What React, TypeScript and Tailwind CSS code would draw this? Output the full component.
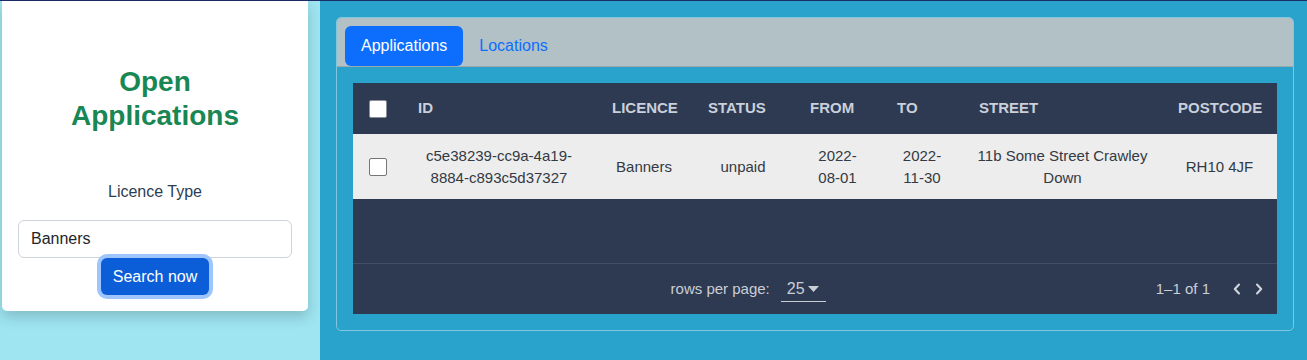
import React from "react";

const cols = "grid grid-cols-[49px_194px_96px_102px_87px_82px_199px_115px]";

function Chevron({ dir }: { dir: "left" | "right" }) {
  return (
    <svg width="10" height="14" viewBox="0 0 10 14" fill="none">
      <path
        d={dir === "left" ? "M7 2.5L2.8 7L7 11.5" : "M3 2.5L7.2 7L3 11.5"}
        stroke="#d3d7de"
        strokeWidth="2"
        strokeLinecap="round"
        strokeLinejoin="round"
      />
    </svg>
  );
}

export default function App() {
  const headers = ["ID", "LICENCE", "STATUS", "FROM", "TO", "STREET", "POSTCODE"];
  const row: [string, string][] = [
    ["c5e38239-cc9a-4a19-8884-c893c5d37327", "px-[16px]"],
    ["Banners", "px-[16px]"],
    ["unpaid", "px-[16px]"],
    ["2022-08-01", "px-[16px]"],
    ["2022-11-30", "px-[16px]"],
    ["11b Some Street Crawley Down", "px-[12px]"],
    ["RH10 4JF", "px-[16px]"],
  ];
  return (
    <div
      className="w-[1307px] h-[360px] flex flex-col overflow-hidden"
      style={{ fontFamily: '"Liberation Sans", Arial, sans-serif' }}
    >
      <div className="h-px bg-[#1c2c68] shrink-0" />
      <div className="flex flex-1 min-w-0">
        {/* Left panel */}
        <aside className="w-[320px] shrink-0 bg-[#9ee5f1] pl-[2px]">
          <div className="w-[306px] bg-white rounded-b-[5px] shadow-[0_6px_14px_rgba(0,0,0,0.18)] flex flex-col items-center pt-[64px] pb-[16px] px-[16px]">
            <h1 className="w-[240px] text-center text-[28px] leading-[34px] font-bold text-[#198754]">
              Open Applications
            </h1>
            <div className="mt-[47px] text-[16px] leading-[24px] text-[#2c3e50]">Licence Type</div>
            <input
              readOnly
              value="Banners"
              className="mt-[16px] w-full h-[38px] border border-[#ced4da] rounded-[6px] px-[12px] text-[16px] text-[#212529] bg-white outline-none"
            />
            <button className="h-[37px] px-[12px] rounded-[6px] bg-[#0b5ed7] text-white text-[16px] shadow-[0_0_0_4px_#9ec5fe]">
              Search now
            </button>
          </div>
        </aside>

        {/* Right area */}
        <main className="flex-1 min-w-0 bg-[#29a3cc] pt-[16px] pl-[16px] pr-[13px]">
          <div className="h-[314px] border border-[#7fc6df] rounded-[5px] flex flex-col">
            <div className="h-[49px] bg-[#b2c1c6] border-b border-[#9aa9ae] rounded-t-[4px] flex items-end pl-[8px] shrink-0">
              <div className="h-[40px] px-[16px] bg-[#0d6efd] text-white rounded-[6px] text-[16px] flex items-center">
                Applications
              </div>
              <div className="h-[40px] px-[16px] text-[#0d6efd] text-[16px] flex items-center">Locations</div>
            </div>
            <div className="p-[16px] flex-1">
              <div className="h-full bg-[#2e3a52] flex flex-col">
                {/* header */}
                <div className={`${cols} h-[51px] items-center text-[15px] font-bold text-[#c9d0db]`}>
                  <div className="pl-[16px] flex items-center">
                    <div className="w-[18px] h-[18px] bg-white border border-[#8a8f99] rounded-[2px]" />
                  </div>
                  {headers.map((h) => (
                    <div key={h} className="pl-[16px] whitespace-nowrap">
                      {h}
                    </div>
                  ))}
                </div>
                {/* row */}
                <div className={`${cols} h-[65px] items-center bg-[#ededed] text-[15px] leading-[22px] text-[#333a44]`}>
                  <div className="pl-[16px] flex items-center">
                    <div className="w-[18px] h-[18px] bg-white border border-[#767676] rounded-[2px]" />
                  </div>
                  {row.map(([c, pad], i) => (
                    <div key={i} className={`${pad} text-center`}>
                      {c}
                    </div>
                  ))}
                </div>
                <div className="flex-1 border-b border-[#434e66]" />
                {/* footer */}
                <div className="h-[50px] flex items-center justify-end pr-[13px] text-[15px] text-[#c9ced7]">
                  <span>rows per page:</span>
                  <div className="ml-[11px] w-[45px] h-[26px] border-b border-[#c9ced7] flex items-center pl-[6px] gap-[3px] text-[16px]">
                    <span>25</span>
                    <svg width="11" height="6" viewBox="0 0 11 6">
                      <path d="M0 0H11L5.5 6Z" fill="#c9ced7" />
                    </svg>
                  </div>
                  <span className="ml-[330px]">1–1 of 1</span>
                  <div className="ml-[22px] flex items-center gap-[12px]">
                    <Chevron dir="left" />
                    <Chevron dir="right" />
                  </div>
                </div>
              </div>
            </div>
          </div>
        </main>
      </div>
    </div>
  );
}
